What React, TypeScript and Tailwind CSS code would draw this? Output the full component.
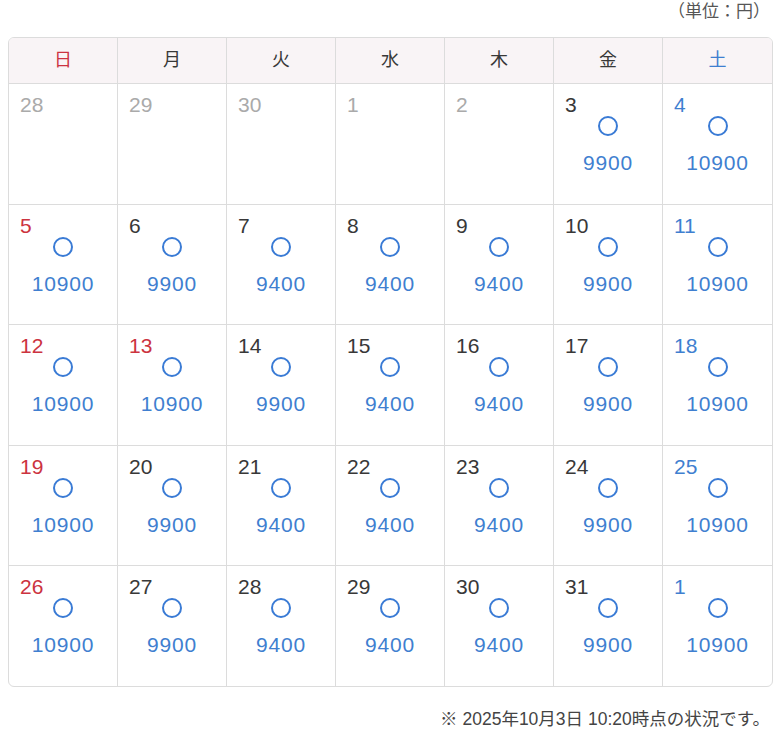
import React from 'react';

type Day = { d: number; muted?: boolean; price?: number };

const HEADERS = ['日', '月', '火', '水', '木', '金', '土'];

const WEEKS: Day[][] = [
  [
    { d: 28, muted: true },
    { d: 29, muted: true },
    { d: 30, muted: true },
    { d: 1, muted: true },
    { d: 2, muted: true },
    { d: 3, price: 9900 },
    { d: 4, price: 10900 },
  ],
  [
    { d: 5, price: 10900 },
    { d: 6, price: 9900 },
    { d: 7, price: 9400 },
    { d: 8, price: 9400 },
    { d: 9, price: 9400 },
    { d: 10, price: 9900 },
    { d: 11, price: 10900 },
  ],
  [
    { d: 12, price: 10900 },
    { d: 13, price: 10900 },
    { d: 14, price: 9900 },
    { d: 15, price: 9400 },
    { d: 16, price: 9400 },
    { d: 17, price: 9900 },
    { d: 18, price: 10900 },
  ],
  [
    { d: 19, price: 10900 },
    { d: 20, price: 9900 },
    { d: 21, price: 9400 },
    { d: 22, price: 9400 },
    { d: 23, price: 9400 },
    { d: 24, price: 9900 },
    { d: 25, price: 10900 },
  ],
  [
    { d: 26, price: 10900 },
    { d: 27, price: 9900 },
    { d: 28, price: 9400 },
    { d: 29, price: 9400 },
    { d: 30, price: 9400 },
    { d: 31, price: 9900 },
    { d: 1, price: 10900 },
  ],
];

// holiday on the 13th shows in red like a sunday
const RED_DAYS = [13];

export default function App() {
  const font = { fontFamily: '"Liberation Sans", "Noto Sans CJK JP", sans-serif' };

  const dayColor = (day: Day, col: number) => {
    if (day.muted) return 'text-[#aaaaaa]';
    if (col === 0 || RED_DAYS.includes(day.d)) return 'text-[#cc3340]';
    if (col === 6) return 'text-[#3f7fd0]';
    return 'text-[#383838]';
  };

  return (
    <div className="w-[780px] bg-white pl-[8px] pr-[7px] pt-0" style={font}>
      <div className="text-right text-[17px] leading-[24px] text-[#555] pr-[3px]">（単位：円）</div>

      <div className="mt-[13px] border border-[#dcdcdc] rounded-[6px] overflow-hidden">
        <div className="grid grid-cols-7 bg-[#f9f4f6] border-b border-[#dcdcdc]">
          {HEADERS.map((h, i) => (
            <div
              key={h}
              className={
                'h-[45px] flex items-center justify-center text-[18px] ' +
                (i < 6 ? 'border-r border-[#dcdcdc] ' : '') +
                (i === 0 ? 'text-[#cc3340]' : i === 6 ? 'text-[#3f7fd0]' : 'text-[#383838]')
              }
            >
              {h}
            </div>
          ))}
        </div>

        {WEEKS.map((week, wi) => (
          <div
            key={wi}
            className={'grid grid-cols-7 ' + (wi < WEEKS.length - 1 ? 'border-b border-[#dcdcdc]' : '')}
          >
            {week.map((day, ci) => (
              <div
                key={ci}
                className={
                  'h-[119.6px] flex flex-col pt-[9px] ' + (ci < 6 ? 'border-r border-[#dcdcdc]' : '')
                }
              >
                <div className={'pl-[11px] text-[21px] leading-[24px] ' + dayColor(day, ci)}>{day.d}</div>
                {day.price && (
                  <>
                    <div className="mx-auto mt-[-1px] w-[20px] h-[20px] rounded-full border-2 border-[#3a7bd5]" />
                    <div className="mt-[13px] text-center text-[21px] leading-[28px] text-[#3f7fd0] tracking-[0.8px]">
                      {day.price}
                    </div>
                  </>
                )}
              </div>
            ))}
          </div>
        ))}
      </div>

      <div className="mt-[20px] text-right text-[17.5px] leading-[24px] text-[#444] pr-[3px]">
        ※ 2025年10月3日 10:20時点の状況です。
      </div>
    </div>
  );
}
